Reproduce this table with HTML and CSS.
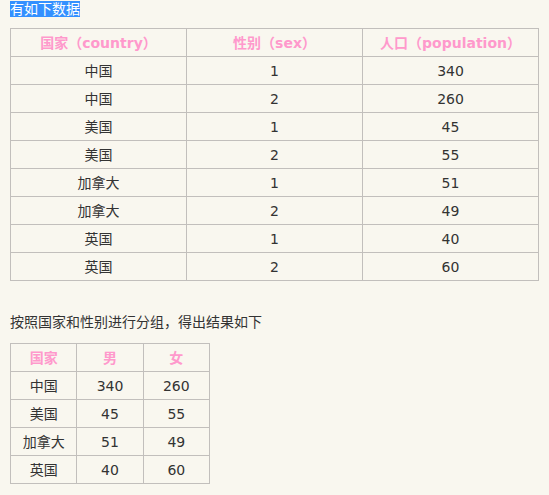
FILE: index.html
```html
<!DOCTYPE html>
<html>
<head>
<meta charset="utf-8">
<link rel="stylesheet" href="styles.css">
</head>
<body>
<p class="intro"><span class="sel">有如下数据</span></p>
<table class="data wide">
<thead><tr><th>国家（country）</th><th>性别（sex）</th><th>人口（population）</th></tr></thead>
<tbody>
<tr><td>中国</td><td>1</td><td>340</td></tr>
<tr><td>中国</td><td>2</td><td>260</td></tr>
<tr><td>美国</td><td>1</td><td>45</td></tr>
<tr><td>美国</td><td>2</td><td>55</td></tr>
<tr><td>加拿大</td><td>1</td><td>51</td></tr>
<tr><td>加拿大</td><td>2</td><td>49</td></tr>
<tr><td>英国</td><td>1</td><td>40</td></tr>
<tr><td>英国</td><td>2</td><td>60</td></tr>
</tbody>
</table>
<p class="para">按照国家和性别进行分组，得出结果如下</p>
<table class="data narrow">
<thead><tr><th>国家</th><th>男</th><th>女</th></tr></thead>
<tbody>
<tr><td>中国</td><td>340</td><td>260</td></tr>
<tr><td>美国</td><td>45</td><td>55</td></tr>
<tr><td>加拿大</td><td>51</td><td>49</td></tr>
<tr><td>英国</td><td>40</td><td>60</td></tr>
</tbody>
</table>
</body>
</html>
```
FILE: styles.css
```css
html, body {
  background: #f9f7ef;
}
body {
  margin: 0;
  padding: 0 10px;
  font-family: "DejaVu Sans", "Noto Sans CJK SC", sans-serif;
  font-size: 14px;
  color: #333333;
}
.intro {
  margin: 0 0 10px 0;
  line-height: 18px;
}
.sel {
  background: #3390ff;
  color: #ffffff;
}
.data {
  border-collapse: collapse;
  table-layout: fixed;
}
.data th, .data td {
  border: 1px solid #c2bfbc;
  height: 27px;
  padding: 0;
  text-align: center;
  vertical-align: middle;
  line-height: 18px;
}
.data th {
  color: #ff99cc;
  font-weight: bold;
}
.wide {
  width: 529px;
}
.narrow {
  width: 200px;
}
.para {
  margin: 32px 0 12px 0;
  line-height: 18px;
}
```
